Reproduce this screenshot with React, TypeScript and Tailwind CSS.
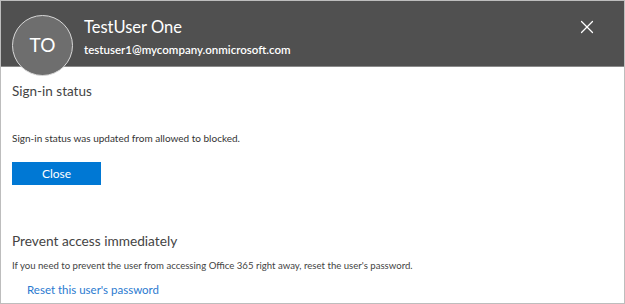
import { X } from "lucide-react";

export default function App() {
  const font = { fontFamily: 'Lato, "Noto Sans", sans-serif' };

  return (
    <div
      className="w-[625px] h-[304px] bg-white border border-[#bdbdbd] overflow-hidden text-[#333333]"
      style={font}
    >
      <div className="relative flex items-start h-[66px] bg-[#505050] border-b border-[#8a8a8a]">
        <div className="ml-[11px] mt-[14px] w-[61px] h-[61px] rounded-full bg-[#6e6e6e] border border-[#d8d8d8] flex items-center justify-center text-white text-[19px] shrink-0 z-10">
          TO
        </div>
        <div className="ml-[11px] mt-[16px] flex flex-col text-white">
          <div className="text-[16.5px] leading-[21px]">TestUser One</div>
          <div className="text-[11.5px] leading-[15px] font-semibold mt-[4px]">
            testuser1@mycompany.onmicrosoft.com
          </div>
        </div>
        <div className="ml-auto mr-[26px] mt-[15px] text-white">
          <X size={22} strokeWidth={1.3} />
        </div>
      </div>

      <div className="px-[11px]">
        <div className="mt-[14px] text-[13.5px] leading-[20px] text-[#444444]">Sign-in status</div>
        <div className="mt-[30px] text-[10px] leading-[14px] text-[#333333]">
          Sign-in status was updated from allowed to blocked.
        </div>
        <div className="mt-[17px] w-[89px] h-[23px] bg-[#0078d4] text-white text-[12px] flex items-center justify-center">
          Close
        </div>
        <div className="mt-[46px] text-[13.7px] leading-[20px] text-[#444444]">Prevent access immediately</div>
        <div className="mt-[7px] text-[9.6px] leading-[16px] text-[#444444]">
          If you need to prevent the user from accessing Office 365 right away, reset the user's password.
        </div>
        <div className="mt-[8px] ml-[15px] text-[11.5px] leading-[16px] text-[#2a7ad0]">
          Reset this user's password
        </div>
      </div>
    </div>
  );
}
